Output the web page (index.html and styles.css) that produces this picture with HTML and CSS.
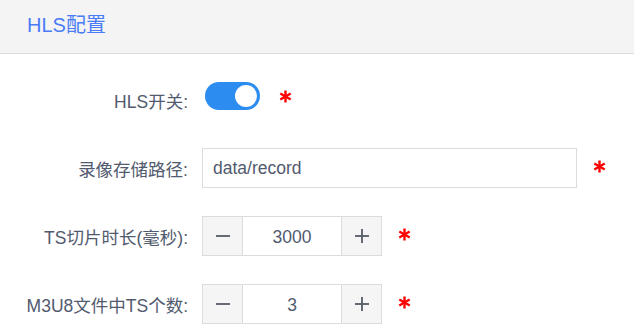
FILE: index.html
```html
<!DOCTYPE html>
<html lang="zh-CN">

<head>
    <meta charset="UTF-8">
    <title>HLS配置</title>
    <link rel="stylesheet" href="styles.css">
</head>

<body>

    <header class="panel-title">HLS配置</header>

    <section class="form">
        <div class="form-row">
            <label class="form-label">HLS开关:</label>
            <span class="switch switch-on"><span class="switch-knob"></span></span>
            <span class="required required-switch">
                <svg width="13" height="13" viewBox="0 0 13 13"><g stroke="#ff0000" stroke-width="2.4"><line x1="6.5" y1="0.5" x2="6.5" y2="12.5"/><line x1="1.3" y1="3.5" x2="11.7" y2="9.5"/><line x1="1.3" y1="9.5" x2="11.7" y2="3.5"/></g></svg>
            </span>
        </div>

        <div class="form-row">
            <label class="form-label">录像存储路径:</label>
            <input class="text-input" type="text" value="data/record">
            <span class="required">
                <svg width="13" height="13" viewBox="0 0 13 13"><g stroke="#ff0000" stroke-width="2.4"><line x1="6.5" y1="0.5" x2="6.5" y2="12.5"/><line x1="1.3" y1="3.5" x2="11.7" y2="9.5"/><line x1="1.3" y1="9.5" x2="11.7" y2="3.5"/></g></svg>
            </span>
        </div>

        <div class="form-row">
            <label class="form-label">TS切片时长(毫秒):</label>
            <div class="number-input">
                <span class="step-btn step-minus"><svg width="14" height="14" viewBox="0 0 14 14"><line x1="0" y1="7" x2="14" y2="7" stroke="#555b66" stroke-width="1.8"/></svg></span>
                <span class="number-value">3000</span>
                <span class="step-btn step-plus"><svg width="14" height="14" viewBox="0 0 14 14"><g stroke="#555b66" stroke-width="1.8"><line x1="0" y1="7" x2="14" y2="7"/><line x1="7" y1="0" x2="7" y2="14"/></g></svg></span>
            </div>
            <span class="required">
                <svg width="13" height="13" viewBox="0 0 13 13"><g stroke="#ff0000" stroke-width="2.4"><line x1="6.5" y1="0.5" x2="6.5" y2="12.5"/><line x1="1.3" y1="3.5" x2="11.7" y2="9.5"/><line x1="1.3" y1="9.5" x2="11.7" y2="3.5"/></g></svg>
            </span>
        </div>

        <div class="form-row">
            <label class="form-label">M3U8文件中TS个数:</label>
            <div class="number-input">
                <span class="step-btn step-minus"><svg width="14" height="14" viewBox="0 0 14 14"><line x1="0" y1="7" x2="14" y2="7" stroke="#555b66" stroke-width="1.8"/></svg></span>
                <span class="number-value">3</span>
                <span class="step-btn step-plus"><svg width="14" height="14" viewBox="0 0 14 14"><g stroke="#555b66" stroke-width="1.8"><line x1="0" y1="7" x2="14" y2="7"/><line x1="7" y1="0" x2="7" y2="14"/></g></svg></span>
            </div>
            <span class="required">
                <svg width="13" height="13" viewBox="0 0 13 13"><g stroke="#ff0000" stroke-width="2.4"><line x1="6.5" y1="0.5" x2="6.5" y2="12.5"/><line x1="1.3" y1="3.5" x2="11.7" y2="9.5"/><line x1="1.3" y1="9.5" x2="11.7" y2="3.5"/></g></svg>
            </span>
        </div>
    </section>

</body>

</html>
```

FILE: styles.css
```css
body {
    font-family: "Liberation Sans", "Noto Sans CJK SC", sans-serif;
    margin: 0;
    background-color: #ffffff;
    color: #515a6e;
}

.panel-title {
    height: 53px;
    line-height: 50px;
    padding-left: 27px;
    font-size: 20px;
    color: #4a7cf6;
    background-color: #f4f4f4;
    border-bottom: 1px solid #dddddd;
}

.form {
    display: flex;
    flex-direction: column;
    gap: 28px;
    padding-top: 26px;
}

.form-row {
    display: flex;
    align-items: center;
    height: 40px;
}

.form-label {
    width: 188px;
    padding-right: 14px;
    text-align: right;
    font-size: 17.5px;
    color: #515a6e;
}

.switch {
    position: relative;
    width: 55px;
    height: 28px;
    border-radius: 14px;
    background-color: #2d8cf0;
    align-self: flex-start;
    margin-top: 2px;
    margin-left: 3px;
    margin-right: 3px;
}

.switch-knob {
    position: absolute;
    top: 3px;
    right: 3px;
    width: 22px;
    height: 22px;
    border-radius: 50%;
    background-color: #ffffff;
}

.required {
    display: flex;
    margin-left: 16px;
    margin-bottom: 3px;
}

.required-switch {
    margin-bottom: 8px;
}

.text-input {
    box-sizing: border-box;
    width: 375px;
    height: 40px;
    padding: 0 10px;
    border: 1px solid #dcdcdc;
    font-family: inherit;
    font-size: 17.5px;
    color: #515a6e;
    outline: none;
}

.number-input {
    display: flex;
    box-sizing: border-box;
    width: 180px;
    height: 40px;
    border: 1px solid #dcdcdc;
}

.step-btn {
    display: flex;
    align-items: center;
    justify-content: center;
    width: 39px;
    background-color: #f5f5f5;
}

.step-minus {
    border-right: 1px solid #dcdcdc;
}

.step-plus {
    border-left: 1px solid #dcdcdc;
}

.number-value {
    flex: 1;
    display: flex;
    align-items: center;
    justify-content: center;
    font-size: 17.5px;
    color: #515a6e;
    padding-top: 2px;
}
```
